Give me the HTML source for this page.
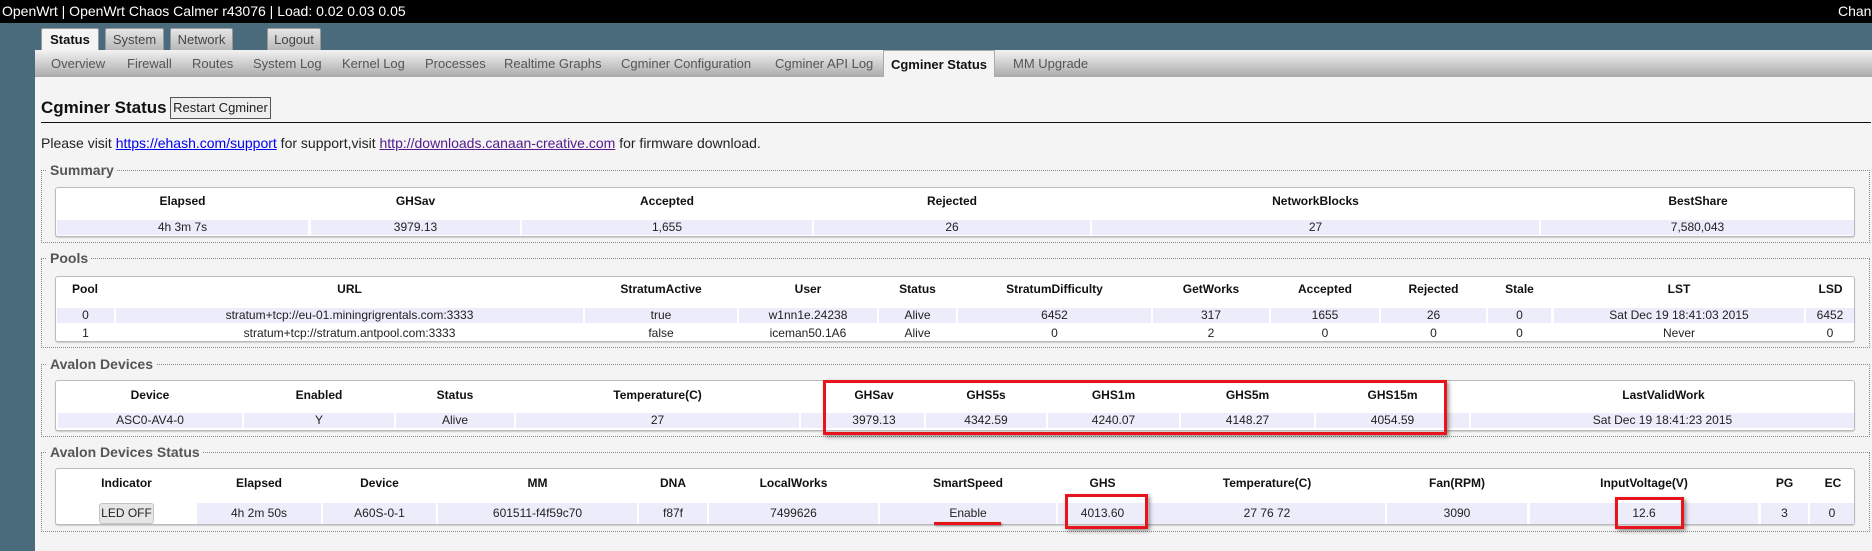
<!DOCTYPE html>
<html><head><meta charset="utf-8"><style>
*{margin:0;padding:0;box-sizing:border-box}
body{width:1872px;height:551px;overflow:hidden;background:#4a6b7c;font-family:"Liberation Sans",sans-serif;position:relative;color:#222}
.a{position:absolute}
#top{left:0;top:0;width:1872px;height:23px;background:#000;color:#fff;font-size:14px;line-height:23px;padding-left:2px}
.tab{top:28px;height:22px;background:#c8c8c8;background:linear-gradient(#e6e6e6,#b8b8b8);border:1px solid #999;border-bottom:none;font-size:13px;line-height:22px;text-align:center;color:#444;border-radius:2px 2px 0 0}
#panel{left:35px;top:50px;width:1837px;height:501px;background:#f4f4f4}
#sub{left:35px;top:50px;width:1837px;height:27px;background:linear-gradient(#f2f2f2,#aaa);font-size:13px;color:#555}
#sub span{position:absolute;top:6px}
.fs{border:1px dotted #888;left:41px;width:1829px}
.lg{left:47px;font-size:14px;font-weight:bold;color:#555;background:#f4f4f4;padding:0 3px;line-height:16px}
.t{left:55px;width:1800px;background:#fff;border:1px solid #bbb;border-radius:3px;box-shadow:0 1px 1px #ccc}
.c{position:absolute;font-size:12px;text-align:center;white-space:nowrap;overflow:hidden}
.h{font-weight:bold;color:#111}
.d{background:#ececfa}
.rb{border:3px solid #e8141b;box-shadow:2px 2px 4px rgba(0,0,0,.4)}
</style></head><body>
<div id="top" class="a">OpenWrt | OpenWrt Chaos Calmer r43076 | Load: 0.02 0.03 0.05<span style="position:absolute;left:1838px">Change</span></div>
<div class="a tab" style="left:41px;width:58px;background:#f4f4f4;font-weight:bold;color:#111">Status</div>
<div class="a tab" style="left:105px;width:59px">System</div>
<div class="a tab" style="left:170px;width:63px">Network</div>
<div class="a tab" style="left:267px;width:54px">Logout</div>
<div id="panel" class="a"></div>
<div id="sub" class="a">
<span style="left:16px">Overview</span><span style="left:92px">Firewall</span><span style="left:157px">Routes</span><span style="left:218px">System Log</span><span style="left:307px">Kernel Log</span><span style="left:390px">Processes</span><span style="left:469px">Realtime Graphs</span><span style="left:586px">Cgminer Configuration</span><span style="left:740px">Cgminer API Log</span>
<span style="left:848px;top:0;height:27px;width:112px;background:#f4f4f4;color:#111;font-weight:bold;line-height:27px;text-align:center;border:1px solid #aaa;border-bottom:none">Cgminer Status</span><span style="left:978px">MM Upgrade</span></div>
<div class="a" style="left:41px;top:98px;font-size:17px;font-weight:bold;color:#111">Cgminer Status</div>
<div class="a" style="left:170px;top:97px;width:101px;height:22px;border:1px solid #555;background:#eee;font-size:13px;line-height:20px;text-align:center">Restart Cgminer</div>
<div class="a" style="left:41px;top:122px;width:1830px;height:1px;background:#111"></div>
<div class="a" style="left:41px;top:135px;font-size:14px">Please visit <span style="color:#00e;text-decoration:underline">https://ehash.com/support</span> for support,visit <span style="color:#551a8b;text-decoration:underline">http://downloads.canaan-creative.com</span> for firmware download.</div>

<div class="a fs" style="top:170px;height:73px"></div><div class="a lg" style="top:162px">Summary</div>
<div class="a t" style="top:187px;height:50px">
<div class="c h" style="left:0;width:253px;top:6px">Elapsed</div><div class="c h" style="left:255px;width:209px;top:6px">GHSav</div><div class="c h" style="left:466px;width:290px;top:6px">Accepted</div><div class="c h" style="left:758px;width:276px;top:6px">Rejected</div><div class="c h" style="left:1036px;width:447px;top:6px">NetworkBlocks</div><div class="c h" style="left:1485px;width:314px;top:6px">BestShare</div>
<div class="c d" style="left:1px;width:251px;top:32px;height:15px">4h 3m 7s</div><div class="c d" style="left:255px;width:209px;top:32px;height:15px">3979.13</div><div class="c d" style="left:466px;width:290px;top:32px;height:15px">1,655</div><div class="c d" style="left:758px;width:276px;top:32px;height:15px">26</div><div class="c d" style="left:1036px;width:447px;top:32px;height:15px">27</div><div class="c d" style="left:1485px;width:313px;top:32px;height:15px">7,580,043</div>
</div>

<div class="a fs" style="top:258px;height:90px"></div><div class="a lg" style="top:250px">Pools</div>
<div class="a t" style="top:276px;height:66px">
<div class="c h" style="left:0;width:58px;top:5px">Pool</div><div class="c h" style="left:60px;width:467px;top:5px">URL</div><div class="c h" style="left:529px;width:152px;top:5px">StratumActive</div><div class="c h" style="left:683px;width:138px;top:5px">User</div><div class="c h" style="left:823px;width:77px;top:5px">Status</div><div class="c h" style="left:902px;width:193px;top:5px">StratumDifficulty</div><div class="c h" style="left:1097px;width:116px;top:5px">GetWorks</div><div class="c h" style="left:1215px;width:108px;top:5px">Accepted</div><div class="c h" style="left:1325px;width:105px;top:5px">Rejected</div><div class="c h" style="left:1432px;width:63px;top:5px">Stale</div><div class="c h" style="left:1498px;width:250px;top:5px">LST</div><div class="c h" style="left:1750px;width:49px;top:5px">LSD</div>
<div class="c d" style="left:1px;width:57px;top:31px;height:15px">0</div><div class="c d" style="left:60px;width:467px;top:31px;height:15px">stratum+tcp://eu-01.miningrigrentals.com:3333</div><div class="c d" style="left:529px;width:152px;top:31px;height:15px">true</div><div class="c d" style="left:683px;width:138px;top:31px;height:15px">w1nn1e.24238</div><div class="c d" style="left:823px;width:77px;top:31px;height:15px">Alive</div><div class="c d" style="left:902px;width:193px;top:31px;height:15px">6452</div><div class="c d" style="left:1097px;width:116px;top:31px;height:15px">317</div><div class="c d" style="left:1215px;width:108px;top:31px;height:15px">1655</div><div class="c d" style="left:1325px;width:105px;top:31px;height:15px">26</div><div class="c d" style="left:1432px;width:63px;top:31px;height:15px">0</div><div class="c d" style="left:1498px;width:250px;top:31px;height:15px">Sat Dec 19 18:41:03 2015</div><div class="c d" style="left:1750px;width:48px;top:31px;height:15px">6452</div>
<div class="c" style="left:1px;width:57px;top:49px">1</div><div class="c" style="left:60px;width:467px;top:49px">stratum+tcp://stratum.antpool.com:3333</div><div class="c" style="left:529px;width:152px;top:49px">false</div><div class="c" style="left:683px;width:138px;top:49px">iceman50.1A6</div><div class="c" style="left:823px;width:77px;top:49px">Alive</div><div class="c" style="left:902px;width:193px;top:49px">0</div><div class="c" style="left:1097px;width:116px;top:49px">2</div><div class="c" style="left:1215px;width:108px;top:49px">0</div><div class="c" style="left:1325px;width:105px;top:49px">0</div><div class="c" style="left:1432px;width:63px;top:49px">0</div><div class="c" style="left:1498px;width:250px;top:49px">Never</div><div class="c" style="left:1750px;width:48px;top:49px">0</div>
</div>

<div class="a fs" style="top:364px;height:73px"></div><div class="a lg" style="top:356px">Avalon Devices</div>
<div class="a t" style="top:380px;height:51px">
<div class="c h" style="left:2px;width:184px;top:7px">Device</div><div class="c h" style="left:188px;width:150px;top:7px">Enabled</div><div class="c h" style="left:340px;width:118px;top:7px">Status</div><div class="c h" style="left:460px;width:283px;top:7px">Temperature(C)</div><div class="c h" style="left:768px;width:100px;top:7px">GHSav</div><div class="c h" style="left:870px;width:120px;top:7px">GHS5s</div><div class="c h" style="left:992px;width:131px;top:7px">GHS1m</div><div class="c h" style="left:1125px;width:133px;top:7px">GHS5m</div><div class="c h" style="left:1260px;width:153px;top:7px">GHS15m</div><div class="c h" style="left:1415px;width:385px;top:7px">LastValidWork</div>
<div class="c d" style="left:2px;width:184px;top:32px;height:15px">ASC0-AV4-0</div><div class="c d" style="left:188px;width:150px;top:32px;height:15px">Y</div><div class="c d" style="left:340px;width:118px;top:32px;height:15px">Alive</div><div class="c d" style="left:460px;width:283px;top:32px;height:15px">27</div><div class="c d" style="left:745px;width:21px;top:32px;height:15px"></div><div class="c d" style="left:768px;width:100px;top:32px;height:15px">3979.13</div><div class="c d" style="left:870px;width:120px;top:32px;height:15px">4342.59</div><div class="c d" style="left:992px;width:131px;top:32px;height:15px">4240.07</div><div class="c d" style="left:1125px;width:133px;top:32px;height:15px">4148.27</div><div class="c d" style="left:1260px;width:153px;top:32px;height:15px">4054.59</div><div class="c d" style="left:1415px;width:383px;top:32px;height:15px">Sat Dec 19 18:41:23 2015</div>
</div>
<div class="a rb" style="left:823px;top:380px;width:624px;height:55px"></div>

<div class="a fs" style="top:452px;height:80px"></div><div class="a lg" style="top:444px">Avalon Devices Status</div>
<div class="a t" style="top:468px;height:57px">
<div class="c h" style="left:2px;width:137px;top:7px">Indicator</div><div class="c h" style="left:141px;width:124px;top:7px">Elapsed</div><div class="c h" style="left:267px;width:113px;top:7px">Device</div><div class="c h" style="left:382px;width:199px;top:7px">MM</div><div class="c h" style="left:583px;width:68px;top:7px">DNA</div><div class="c h" style="left:653px;width:169px;top:7px">LocalWorks</div><div class="c h" style="left:824px;width:176px;top:7px">SmartSpeed</div><div class="c h" style="left:1002px;width:89px;top:7px">GHS</div><div class="c h" style="left:1093px;width:236px;top:7px">Temperature(C)</div><div class="c h" style="left:1331px;width:140px;top:7px">Fan(RPM)</div><div class="c h" style="left:1474px;width:228px;top:7px">InputVoltage(V)</div><div class="c h" style="left:1705px;width:47px;top:7px">PG</div><div class="c h" style="left:1754px;width:46px;top:7px">EC</div>
<div class="c d" style="left:141px;width:124px;top:34px;height:21px;line-height:21px">4h 2m 50s</div><div class="c d" style="left:267px;width:113px;top:34px;height:21px;line-height:21px">A60S-0-1</div><div class="c d" style="left:382px;width:199px;top:34px;height:21px;line-height:21px">601511-f4f59c70</div><div class="c d" style="left:583px;width:68px;top:34px;height:21px;line-height:21px">f87f</div><div class="c d" style="left:653px;width:169px;top:34px;height:21px;line-height:21px">7499626</div><div class="c d" style="left:824px;width:176px;top:34px;height:21px;line-height:21px">Enable</div><div class="c d" style="left:1002px;width:89px;top:34px;height:21px;line-height:21px">4013.60</div><div class="c d" style="left:1093px;width:236px;top:34px;height:21px;line-height:21px">27 76 72</div><div class="c d" style="left:1331px;width:140px;top:34px;height:21px;line-height:21px">3090</div><div class="c d" style="left:1474px;width:228px;top:34px;height:21px;line-height:21px">12.6</div><div class="c d" style="left:1705px;width:47px;top:34px;height:21px;line-height:21px">3</div><div class="c d" style="left:1754px;width:44px;top:34px;height:21px;line-height:21px">0</div>
<div class="c" style="left:43px;top:34px;width:55px;height:21px;line-height:19px;background:#e6e6e6;border:1px solid #c4c4c4;border-radius:3px">LED OFF</div>
</div>
<div class="a rb" style="left:1065px;top:494px;width:83px;height:35px"></div>
<div class="a rb" style="left:1615px;top:497px;width:69px;height:32px"></div>
<div class="a" style="left:934px;top:522px;width:67px;height:3px;background:#e8141b;box-shadow:1px 1px 2px rgba(0,0,0,.4)"></div>
</body></html>
